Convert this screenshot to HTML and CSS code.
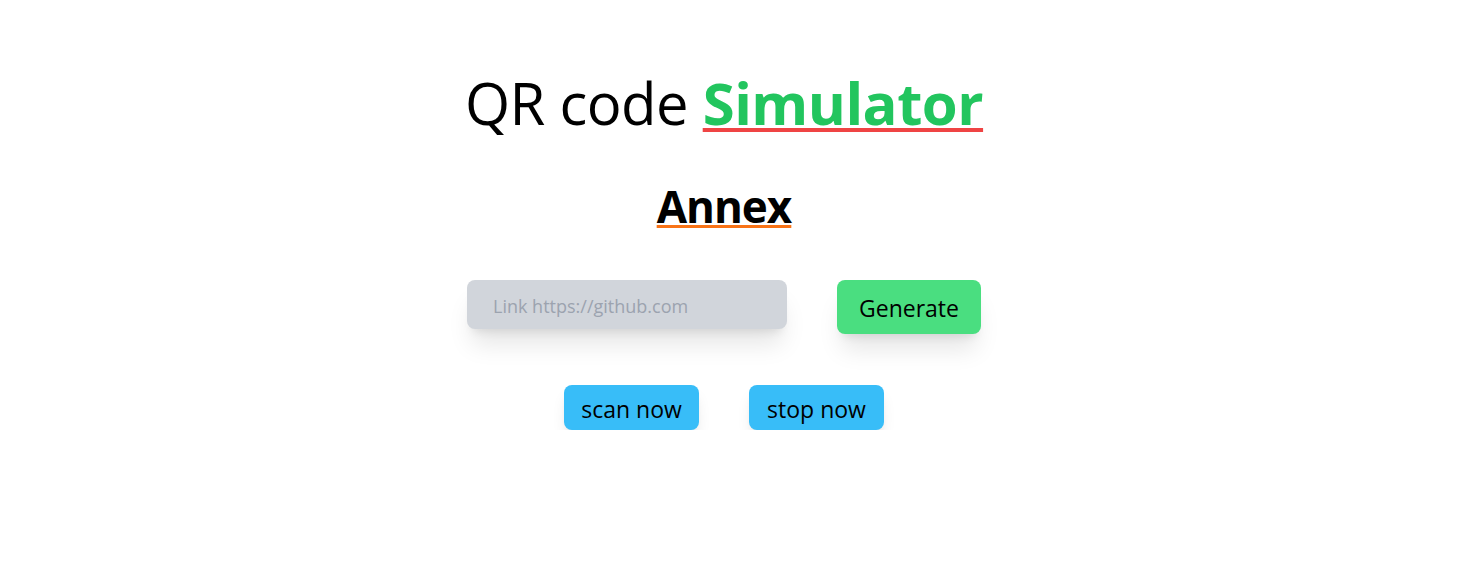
FILE: index.html
```html
<!DOCTYPE html>
<html lang="en">
<head>
<meta charset="utf-8">
<title>QR code Simulator</title>
<link rel="stylesheet" href="styles.css">
</head>
<body>
<main class="page">
  <h1 class="title">QR code <span class="accent">Simulator</span></h1>
  <h2 class="subtitle">Annex</h2>
  <div class="gen-row">
    <input class="link-input" type="text" placeholder="Link https://github.com">
    <button class="btn btn-generate" type="button">Generate</button>
  </div>
  <div class="scan-row">
    <button class="btn btn-scan" type="button">scan now</button>
    <button class="btn btn-scan" type="button">stop now</button>
  </div>
</main>
</body>
</html>
```
FILE: styles.css
```css
* { box-sizing: border-box; }
html, body { margin: 0; padding: 0; background: #ffffff; }
body {
  font-family: "Open Sans", "Noto Sans", sans-serif;
  color: #000;
}
.page {
  display: flex;
  flex-direction: column;
  align-items: center;
  padding: 74px 20px 0 0;
}
.title {
  margin: 0;
  font-size: 58px;
  line-height: 58px;
  font-weight: 400;
  letter-spacing: -0.5px;
  white-space: nowrap;
}
.accent {
  color: #22c55e;
  font-weight: 700;
  text-decoration: underline;
  text-decoration-color: #ef4444;
  text-decoration-thickness: 4px;
  text-underline-offset: 3px;
}
.subtitle {
  margin: 50px 0 0;
  font-size: 44px;
  line-height: 48px;
  font-weight: 700;
  letter-spacing: -1px;
  text-decoration: underline;
  text-decoration-color: #f97316;
  text-decoration-thickness: 3px;
  text-underline-offset: 2px;
}
.gen-row {
  margin-top: 50px;
  display: flex;
  align-items: flex-start;
  gap: 50px;
}
.link-input {
  width: 320px;
  height: 49px;
  border: none;
  outline: none;
  border-radius: 8px;
  background: #d1d5db;
  padding: 3px 0 0 26px;
  font-family: inherit;
  font-size: 18px;
  color: #374151;
  box-shadow: 0 20px 25px -5px rgba(0,0,0,0.1), 0 8px 10px -6px rgba(0,0,0,0.1);
}
.link-input::placeholder { color: #9ca3af; }
.btn {
  border: none;
  border-radius: 8px;
  font-family: inherit;
  font-size: 23px;
  font-weight: 500;
  color: #000;
  padding: 0;
  display: flex;
  align-items: center;
  justify-content: center;
  cursor: pointer;
}
.btn-generate {
  width: 144px;
  height: 54px;
  background: #4ade80;
  padding-top: 2px;
  box-shadow: 0 20px 25px -5px rgba(0,0,0,0.1), 0 8px 10px -6px rgba(0,0,0,0.1);
}
.scan-row {
  margin-top: 51px;
  display: flex;
  gap: 50px;
}
.btn-scan {
  width: 135px;
  height: 45px;
  background: #38bdf8;
  padding-top: 2px;
  box-shadow: 0 10px 15px -3px rgba(0,0,0,0.1), 0 4px 6px -4px rgba(0,0,0,0.1);
}
```
